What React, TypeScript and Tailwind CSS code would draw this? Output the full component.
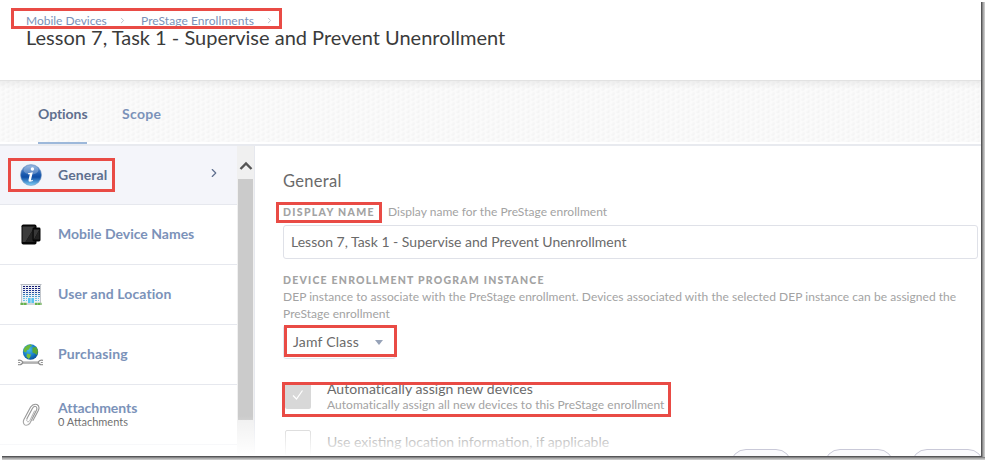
import React from "react";
import { ChevronRight } from "lucide-react";

function InfoIcon() {
  return (
    <svg width="22" height="22" viewBox="0 0 22 22">
      <defs>
        <linearGradient id="infoBall" x1="0" y1="0" x2="0" y2="1">
          <stop offset="0" stopColor="#7ea6da" />
          <stop offset="0.45" stopColor="#1d5cb0" />
          <stop offset="0.6" stopColor="#0f4ea6" />
          <stop offset="1" stopColor="#7fd0f6" />
        </linearGradient>
      </defs>
      <circle cx="11" cy="11" r="10.5" fill="url(#infoBall)" stroke="#7d9cc4" strokeWidth="0.6" />
      <ellipse cx="11" cy="6" rx="7.5" ry="4.5" fill="#fff" opacity="0.25" />
      <circle cx="12.4" cy="5" r="1.7" fill="#fff" />
      <path d="M8 9.2 L12.8 8.2 L11 15.8 Q11 16.8 13 15.8 L12.8 17 Q8 19 8.5 16 L9.8 10.2 L8 10.2 Z" fill="#fff" />
    </svg>
  );
}

function DevicesIcon() {
  return (
    <svg width="20" height="21" viewBox="0 0 20 21">
      <rect x="0.5" y="0.5" width="15" height="20" rx="1.8" fill="#060606" />
      <path d="M1.5 2.5h12.5L4.5 18h-3z" fill="#3c3c3c" />
      <path d="M14 2.5V18H4.5z" fill="#242424" />
      <rect x="11.5" y="3.5" width="8" height="14" rx="1.4" fill="#050505" />
      <path d="M12.7 5.5h5.8L13 15.5h-.3z" fill="#383838" />
      <path d="M18.5 5.5v10H13z" fill="#222" />
    </svg>
  );
}

function BuildingIcon() {
  const rows = [2.5, 4.5, 6.5, 8.5, 10.5, 12.5];
  const colors = ["#141c70", "#182380", "#1e3490", "#28509f", "#347ab8", "#4a9fd0"];
  return (
    <svg width="22" height="22" viewBox="0 0 22 22">
      <rect x="1" y="1" width="20" height="18" fill="#eef1f5" />
      <rect x="0.5" y="0" width="21" height="1" fill="#b9bdc4" />
      <path d="M1.5 1v18M20.5 1v18" stroke="#c3c7cd" strokeWidth="1" />
      {rows.map((y, i) => (
        <path
          key={y}
          d={`M3 ${y}h17`}
          stroke={colors[i]}
          strokeWidth="1"
          strokeDasharray="2 1"
          shapeRendering="crispEdges"
        />
      ))}
      <rect x="8" y="14" width="2.6" height="5" fill="#58c4ef" />
      <rect x="11.4" y="14" width="2.6" height="5" fill="#58c4ef" />
      <path d="M3 14.5h4M15 14.5h4M3 16.5h4M15 16.5h4" stroke="#6cc4e8" strokeDasharray="2 1" shapeRendering="crispEdges" />
      <path d="M0.5 20h21" stroke="#a9adb3" />
      <path d="M0.5 19.8h6.5M15 19.8h6.5" stroke="#67b34c" strokeWidth="2.2" strokeDasharray="2.6 0.4" />
    </svg>
  );
}

function GlobeIcon() {
  return (
    <svg width="27" height="22" viewBox="0 0 27 22">
      <defs>
        <radialGradient id="globe" cx="0.4" cy="0.35" r="0.7">
          <stop offset="0" stopColor="#48c0f2" />
          <stop offset="0.6" stopColor="#187cc6" />
          <stop offset="1" stopColor="#0b4d96" />
        </radialGradient>
      </defs>
      <path d="M5 18.5h17" stroke="#9b9b9b" strokeWidth="2.4" />
      <path d="M6 17.9h15" stroke="#dcdcdc" strokeWidth="0.9" />
      <path
        d="M1 16.4q3.6-1 4.8 1.9q-1 3-4.8 2.3M1.2 18.5h2M26 16.4q-3.6-1-4.8 1.9q1 3 4.8 2.3M25.8 18.5h-2"
        fill="none"
        stroke="#8f8f8f"
        strokeWidth="1.2"
      />
      <circle cx="13.5" cy="8" r="7.7" fill="url(#globe)" />
      <path d="M7 4.5q3-4 7-4l1 1.5-2 1-1 2.5-2 .5-1 2.5-2.5-1z" fill="#6cb83a" />
      <path d="M15.5 3.5l4-.5 1.5 4-1 4-2-1.5-2.5-1z" fill="#5aa834" />
      <path d="M10 9.5l4 1-1 3-1.5 1.5-2-2.5z" fill="#79bf3d" />
    </svg>
  );
}

function ClipIcon() {
  return (
    <svg width="18" height="24" viewBox="0 0 18 24" fill="none" strokeLinecap="round">
      <path
        d="M5 15.5L10.5 5.2Q12.2 2.4 14 3.6Q15.6 4.8 14.3 7.6L8.3 19.6Q6 23.3 3 21.9Q0.4 20.4 1.8 16.8L8.6 4Q11.3 0.2 15 1.6Q18.2 3.4 16.3 7.4L11 17.5"
        stroke="#969696"
        strokeWidth="1.1"
      />
      <path d="M5 15.5Q4 18.7 5.8 18.9Q7.2 18.9 8 17.2L12.5 8" stroke="#b0b0b0" strokeWidth="1" />
    </svg>
  );
}

const menuItems = [
  { label: "General", icon: <InfoIcon />, active: true, spacing: "tracking-[0.1px]" },
  { label: "Mobile Device Names", icon: <DevicesIcon />, spacing: "tracking-normal" },
  { label: "User and Location", icon: <BuildingIcon />, spacing: "tracking-[0.1px]" },
  { label: "Purchasing", icon: <GlobeIcon />, spacing: "tracking-[0.15px]" },
  { label: "Attachments", icon: <ClipIcon />, sub: "0 Attachments", spacing: "tracking-[-0.05px]" },
];

// Red outline drawn over the highlighted parts of the page
function Highlight({ className }: { className: string }) {
  return <div className={`absolute z-20 border-3 border-[#e94b45] ${className}`} />;
}

function Header() {
  return (
    <header className="h-20 shrink-0 pl-[26px] pt-[13px] bg-white">
      <nav className="flex items-center h-[15px] text-[12px] leading-[15px] text-[#7b92b9] whitespace-nowrap">
        <span className="w-[81px] tracking-[-0.02px]">Mobile Devices</span>
        <ChevronRight size={9} strokeWidth={2.5} className="ml-[11px] text-[#b9bec8]" />
        <span className="ml-[14px] w-[113px] tracking-[0.06px]">PreStage Enrollments</span>
        <ChevronRight size={9} strokeWidth={2.5} className="ml-[11px] text-[#b9bec8]" />
      </nav>
      <h1 className="text-[20px] leading-[18px] text-[#3b3b3b] tracking-normal">
        Lesson 7, Task 1 - Supervise and Prevent Unenrollment
      </h1>
    </header>
  );
}

function TabBar() {
  return (
    <div className="relative h-[66px] shrink-0 border-t border-[#e2e2e2] border-b-2 border-b-[#e8eaef] overflow-hidden">
      <svg className="absolute inset-0" width="982" height="63">
        <defs>
          <linearGradient id="dot" x1="0" y1="0" x2="1" y2="1">
            <stop offset="0" stopColor="#ffffff" />
            <stop offset="1" stopColor="#f0f0f0" />
          </linearGradient>
          <linearGradient id="fall" x1="0" y1="0" x2="0" y2="1">
            <stop offset="0" stopColor="#000" stopOpacity="0.05" />
            <stop offset="1" stopColor="#000" stopOpacity="0" />
          </linearGradient>
          <pattern id="dots" width="10" height="5" patternUnits="userSpaceOnUse">
            <rect width="10" height="5" fill="#fafafa" />
            <circle cx="2.5" cy="2.5" r="2.2" fill="url(#dot)" />
            <circle cx="7.5" cy="5" r="2.2" fill="url(#dot)" />
            <circle cx="7.5" cy="0" r="2.2" fill="url(#dot)" />
          </pattern>
        </defs>
        <rect width="982" height="61" fill="url(#dots)" />
        <rect width="982" height="8" fill="url(#fall)" />
      </svg>
      <div className="relative flex h-full pl-[38px] gap-[35px] text-[14px] font-bold leading-[65px]">
        <span className="w-[49px] text-[#5f6f8e] border-b-2 border-[#9db8da] tracking-[-0.05px]">Options</span>
        <span className="text-[#7b92b9] tracking-[0.3px]">Scope</span>
      </div>
    </div>
  );
}

function Sidebar() {
  return (
    <aside className="w-[237px] shrink-0">
      {menuItems.map((item, index) => (
        <div
          key={index}
          className={`flex items-center border-b border-[#e6e8ee] ${
            item.active ? "h-[59px] bg-[#f4f5fa]" : "h-[60px]"
          }`}
        >
          <div className="w-[58px] pl-[3px] flex justify-center shrink-0">{item.icon}</div>
          <div className="flex-1 pb-px">
            <p
              className={`text-[14px] leading-4 font-bold ${item.spacing} ${
                item.active ? "text-[#5f6f8e]" : "text-[#7b92b9]"
              }`}
            >
              {item.label}
            </p>
            {item.sub && <p className="text-[11px] leading-3 text-[#555]">{item.sub}</p>}
          </div>
          {item.active && <ChevronRight size={14} className="mr-[16px] mb-[4px] text-[#5f6f8e]" />}
        </div>
      ))}
    </aside>
  );
}

function Scrollbar() {
  return (
    <div className="w-[18px] shrink-0 px-px bg-[#f0f0f0] border-r border-[#e6e8ee]">
      <svg className="block" width="15" height="33" viewBox="0 0 15 33">
        <path d="M2.5 23L8 17.5L13.5 23" fill="none" stroke="#555" strokeWidth="2.4" />
      </svg>
      <div className="w-[15px] h-[241px] bg-[#cbcbcb]" />
    </div>
  );
}

function Form() {
  return (
    <main className="flex-1 pl-[28px] pt-[25px] text-[#6a6a6a]">
      <h2 className="text-[16.5px] leading-5 tracking-[0.3px]">General</h2>
      <div className="flex items-center h-4 mt-[13px] text-[#a3a3a3]">
        <label className="w-[105px] pt-[2px] text-[10.5px] font-black tracking-[1.32px]">DISPLAY NAME</label>
        <span className="text-[12px] tracking-[0.03px]">Display name for the PreStage enrollment</span>
      </div>
      <div className="w-[695px] h-[34px] mt-[5px] pl-[7px] border border-[#dfe1e8] rounded-[3px] text-[14px] leading-[31px] tracking-normal">
        Lesson 7, Task 1 - Supervise and Prevent Unenrollment
      </div>
      <p className="mt-[13px] text-[10.5px] leading-4 font-black tracking-[1.22px] text-[#a3a3a3]">
        DEVICE ENROLLMENT PROGRAM INSTANCE
      </p>
      <p className="text-[12px] leading-[17px] tracking-[0.035px] text-[#a3a3a3]">
        DEP instance to associate with the PreStage enrollment. Devices associated with the selected DEP instance can be assigned the
        <br />
        PreStage enrollment
      </p>
      <div className="flex items-center w-[113px] h-[34px] mt-[3px] pl-[9px] border border-[#dfe6ee] rounded-[3px] text-[14px]">
        <span className="w-[82px] pb-px tracking-[0.2px]">Jamf Class</span>
        <svg width="8" height="5" viewBox="0 0 8 5">
          <path d="M0 0h8L4 5z" fill="#97a3b8" />
        </svg>
      </div>
      <div className="flex mt-[22px]">
        <div className="w-[26px] h-[26px] mt-[2px] ml-[2px] rounded-[2px] bg-[#d8d8d8] flex items-center justify-center">
          <svg className="mb-[2px]" width="12" height="12" viewBox="0 0 12 12">
            <path d="M1 6.5L4.5 10L10.5 1.5" fill="none" stroke="#fff" strokeWidth="1.2" />
          </svg>
        </div>
        <div className="ml-4">
          <p className="text-[14px] leading-4 tracking-[0.07px]">Automatically assign new devices</p>
          <p className="mt-px text-[12px] leading-[14px] tracking-[0.04px] text-[#a3a3a3]">
            Automatically assign all new devices to this PreStage enrollment
          </p>
        </div>
      </div>
      <div className="flex mt-[18px]">
        <div className="w-[26px] h-[26px] ml-[2px] rounded-[2px] border border-[#ccc]" />
        <p className="ml-4 mt-1 text-[14px] leading-4 tracking-normal">
          Use existing location information, if applicable
        </p>
      </div>
    </main>
  );
}

export default function App() {
  return (
    <div className="relative w-[985px] h-[460px] bg-white overflow-hidden font-['Lato',sans-serif]">
      <div className="flex flex-col w-[981px] h-[456px] overflow-hidden">
        <Header />
        <TabBar />
        <div className="flex flex-1 min-h-0">
          <Sidebar />
          <Scrollbar />
          <Form />
        </div>
      </div>

      {/* Content fades out at the bottom, under the footer buttons */}
      <div className="absolute left-0 top-[416px] w-[981px] h-10 bg-gradient-to-t from-white to-transparent" />
      <div className="absolute left-0 top-[449px] w-[981px] h-[7px] overflow-hidden">
        <div className="absolute left-[730px] w-[62px] h-8 rounded-full border border-[#c9c9d8] bg-[#fafafd]" />
        <div className="absolute left-[824px] w-[70px] h-8 rounded-full border border-[#c9c9d8] bg-[#fafafd]" />
        <div className="absolute left-[911px] w-[73px] h-8 rounded-full border border-[#c9c9d8] bg-[#fafafd]" />
      </div>

      <Highlight className="left-[11px] top-[8px] w-[271px] h-[21px]" />
      <Highlight className="left-[8px] top-[158px] w-[107px] h-[34px]" />
      <Highlight className="left-[276px] top-[202px] w-[106px] h-[21px]" />
      <Highlight className="left-[284px] top-[325px] w-[113px] h-[32px]" />
      <Highlight className="left-[282px] top-[382px] w-[389px] h-[35px]" />

      {/* Window edge and drop shadow */}
      <div className="absolute left-[2px] top-[456px] w-[983px] h-1 bg-gradient-to-b from-[#3f3f41] via-[#a0a0a0] to-[#d5d5d5]" />
      <div className="absolute left-[981px] top-[2px] w-1 h-[455px] bg-gradient-to-r from-[#3f3f41] via-[#a0a0a0] to-[#d5d5d5]" />
    </div>
  );
}
